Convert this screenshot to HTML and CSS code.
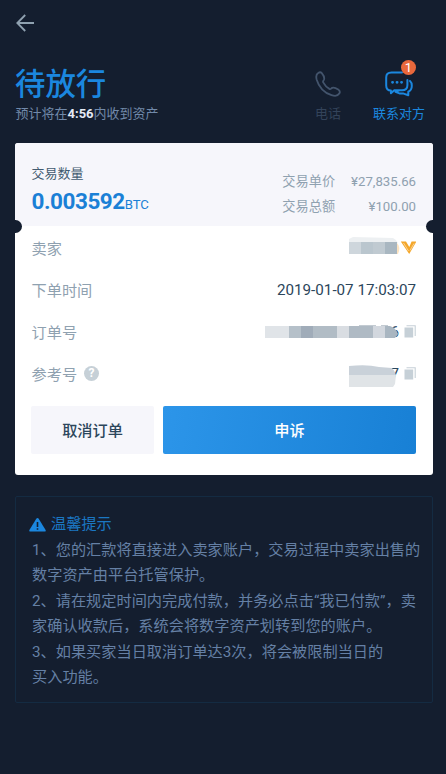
FILE: index.html
```html
<!DOCTYPE html>
<html lang="zh-CN">
<head>
<meta charset="utf-8">
<title>待放行</title>
<link rel="stylesheet" href="styles.css">
</head>
<body>
<nav class="nav">
  <svg class="back" width="18" height="18" viewBox="0 0 18 18"><path d="M9.2 1 1.3 9l7.900 8M1.500 9H18"/></svg>
</nav>
<header class="head">
  <div class="status">
    <h1>待放行</h1>
    <p>预计将在<b>4:56</b>内收到资产</p>
  </div>
  <div class="actions">
    <div class="action muted">
      <svg width="26" height="26" viewBox="0 0 26 26"><path d="M3.200 2C1.200 3.200.9 5.500 1.600 8.400 3.700 15.500 9.300 21.700 16.500 24.100 19.700 25.200 22.600 25.200 24.300 22.600 25.400 20.800 24.700 19.600 23.200 18.600 21.100 17.200 19.200 16 17.200 16.900 15.900 17.500 15.700 18.600 14.400 17.900 11.900 16.500 9.500 13.900 8.200 11.400 7.500 10 8.700 9.600 9.100 8.300 9.600 6.300 8.300 3.900 6.800 2.100 5.600.8 4.500 1.100 3.200 2Z"/></svg>
      <span>电话</span>
    </div>
    <div class="action">
      <svg width="28" height="26" viewBox="0 0 28 26"><path d="M17 1.500H6.500C2.800 1.500 1.200 3.300 1.200 6.500v8c0 3.100 1.400 5 4.700 5v2.800L9.300 19.300H17c3.700 0 5.400-1.800 5.400-5V9M25 10c1.400 1.200 1.800 2.300 1.800 4.700 0 3.200-1 5-3.500 6v3.600L18.600 22.600H15l-4.500-1.700L14.500 19.300"/><path class="dots" d="M7.500 11.300h.1M12 11.300h.1M16.500 11.300h.1"/></svg>
      <span>联系对方</span>
      <i class="badge">1</i>
    </div>
  </div>
</header>
<main class="card">
  <section class="summary">
    <div class="amount">
      <div class="label">交易数量</div>
      <div class="value"><b>0.003592</b><span>BTC</span></div>
    </div>
    <dl class="prices">
      <dt>交易单价</dt><dd>¥27,835.66</dd>
      <dt>交易总额</dt><dd>¥100.00</dd>
    </dl>
  </section>
  <section class="rows">
    <div class="row"><span class="name">卖家</span>
      <svg class="seller" width="68" height="26" viewBox="0 0 68 26"><path fill="#edf0f2" d="M1 5 5 3 45 4q4 2 5 5H1z"/><path fill="#fde4c1" d="M49 9q4 4 1 11h-1z"/><path fill="#ced6dc" d="M1 8h12v12H1z"/><path fill="#bac6ce" d="M13 8h12v12H13z"/><path fill="#c0cad1" d="M25 8h12v12H25z"/><path fill="#a9b7c1" d="M37 8h12v12H37z"/><path fill="#f4a72a" d="M52.800 7.500H58l3.300 5.500 2.300-5.500h4.900L61.200 20z"/><path stroke="#fde4c1" stroke-width=".7" d="m55.500 9 5 8M66 9.500l-4 7"/></svg>
    </div>
    <div class="row"><span class="name">下单时间</span><span class="date">2019-01-07 17:03:07</span></div>
    <div class="row"><span class="name">订单号</span>
      <span class="code"><span class="digit">6</span>
      <svg class="mosaic" width="134" height="14" viewBox="0 0 134 14"><path fill="#8797a5" d="M94 .5h17V1H94zM116 .5h7V1h-7z"/><path fill="#e0e4e8" d="M0 1h24v12H0z"/><path fill="#b5c0c9" d="M24 1h12v12H24z"/><path fill="#a0acb9" d="M36 1h12v12H36z"/><path fill="#b1bcc5" d="M48 1h24v12H48z"/><path fill="#d9dde2" d="M72 1h12v12H72z"/><path fill="#afbac4" d="M84 1h24v12H84z"/><path fill="#d2d7de" d="M108 1h12v12h-12z"/><path fill="#a9b6c1" d="M120 1h5q6 2 8 8l-3 4h-10z"/></svg></span>
      <svg class="copy" width="12" height="13" viewBox="0 0 12 13"><path fill="#c6d0d7" stroke="none" d="M.5 2.500h8.700v10H.5z"/><path d="M2.500.8h8.700v10.200"/></svg>
    </div>
    <div class="row"><span class="name">参考号<i class="help">?</i></span>
      <span class="code"><span class="digit">7</span>
      <svg class="mosaic ref" width="50" height="23" viewBox="0 0 50 23"><path fill="#c9d1d9" d="M0 1Q18-1 30 2l13 1q3 3 4 7H0z"/><path fill="#e0e4e7" d="M0 10h47l-1 9-2 3H0z"/></svg></span>
      <svg class="copy" width="12" height="13" viewBox="0 0 12 13"><path fill="#c6d0d7" stroke="none" d="M.5 2.500h8.700v10H.5z"/><path d="M2.500.8h8.700v10.200"/></svg>
    </div>
  </section>
  <div class="buttons"><button class="cancel">取消订单</button><button class="appeal">申诉</button></div>
</main>
<section class="tips">
  <h2><svg width="17" height="14" viewBox="0 0 17 14"><path fill="#1b87df" d="M7.300.7q1.200-1.200 2.400 0L16.600 12q.5 1.500-1 1.500H1.400Q-.1 13.500.4 12z"/><path fill="#141e2f" d="M7.700 4h1.600v5H7.700zM7.700 10.300h1.600v1.500H7.700z"/></svg>温馨提示</h2>
  <p>1、您的汇款将直接进入卖家账户，交易过程中卖家出售的<br>数字资产由平台托管保护。</p>
  <p>2、请在规定时间内完成付款，并务必点击“我已付款”，卖<br>家确认收款后，系统会将数字资产划转到您的账户。</p>
  <p>3、如果买家当日取消订单达3次，将会被限制当日的<br>买入功能。</p>
</section>
</body>
</html>
```
FILE: styles.css
```css
* { box-sizing: border-box; }
body {
  margin: 0;
  padding: 0 13.500px 0 15px;
  height: 774px;
  overflow: hidden;
  background: #141e2f;
  font-family: Roboto, "Noto Sans CJK SC", sans-serif;
  font-size: 15.200px;
}
h1, h2, p, dl, dd { margin: 0; font-weight: 400; }
i { font-style: normal; }
svg { display: block; flex: none; fill: none; }
.nav { height: 60px; padding: 14px 0 0 1px; }
.back { stroke: #8fa1b0; stroke-width: 1.800; }
.head { height: 82.500px; display: flex; justify-content: space-between; }
.status h1 { height: 43px; line-height: 50px; font-size: 30.400px; font-weight: 500; color: #1b87df; }
.status p { line-height: 22px; font-size: 13px; padding-left: .5px; color: #7189a9; }
.status b { color: #e4eaf5; }
.actions { display: flex; gap: 32px; padding: 11px 7.500px 0 0; }
.action { position: relative; display: flex; flex-direction: column; align-items: center; color: #1b87df; font-size: 13px; }
.action svg { stroke: currentColor; stroke-width: 2; stroke-linejoin: round; stroke-linecap: round; }
.action span { line-height: 20px; margin-top: 7px; }
.action .dots { stroke-width: 2.800; }
.muted { color: #33435a; }
.muted svg { stroke: #43546c; stroke-width: 1.800; }
.badge {
  position: absolute; left: 28px; top: -11px; width: 15px; height: 15px;
  border-radius: 50%; background: #e8683c; color: #fff;
  font-size: 13px; line-height: 15px; text-align: center;
}
.card {
  position: relative; height: 332.500px; border-radius: 3px; background: #fff; overflow: hidden;
}
.card::before, .card::after {
  content: ""; position: absolute; top: 77px; width: 13px; height: 13px;
  border-radius: 50%; background: #141e2f;
}
.card::before { left: -6.500px; }
.card::after { right: -6.500px; }
.summary { height: 83.500px; padding: 20.500px 16.500px 0; display: flex; justify-content: space-between; background: #f6f6fb; }
.label { font-size: 13px; line-height: 22px; color: #425b70; }
.value { line-height: 32px; color: #1b80d6; white-space: nowrap; }
.value b { font-size: 22.500px; letter-spacing: -.45px; }
.value span { font-size: 13.200px; letter-spacing: -.1px; }
.prices { display: grid; grid-template-columns: auto auto; align-content: start; column-gap: 16px; padding-top: 6px; line-height: 25px; font-size: 13.200px; color: #8fa1b0; }
.prices dd { text-align: right; }
.rows { height: 180px; padding: 0 16.500px; }
.row { height: 42px; display: flex; justify-content: space-between; align-items: center; }
.name { flex: 1; display: flex; align-items: center; color: #8fa1b0; }
.date { padding-top: 2px; color: #2c465b; }
.help { width: 15px; height: 15px; margin-left: 7px; border-radius: 50%; background: #c6d0d7; color: #fff; font-size: 12px; font-weight: 700; line-height: 15px; text-align: center; }
.code { position: relative; height: 26px; line-height: 28px; color: #2c465b; }
.mosaic { position: absolute; right: 0; top: 7px; }
.mosaic.ref { top: 5px; }
.copy { margin-left: 5px; stroke: #c6d0d7; stroke-width: 1.100; }
.buttons { display: flex; gap: 9px; padding: 0 16.500px 0 16px; }
.buttons button { height: 48px; border: 0; border-radius: 2px; padding: 0 0 2px; font: 500 15.200px Roboto, "Noto Sans CJK SC", sans-serif; }
.buttons .cancel { width: 123px; background: #f6f6fb; color: #2c465b; }
.buttons .appeal { flex: 1; background: linear-gradient(100deg, #2c95e9, #1880d5); color: #fff; }
.tips { height: 207px; margin-top: 21px; padding: 14px 0 0 16px; border: 1px solid #142b42; border-radius: 2px; line-height: 25.400px; color: #6580a5; white-space: nowrap; }
.tips h2 { display: flex; align-items: center; gap: 5px; height: 27px; margin-left: -3px; font-size: 15.200px; color: #1b77c3; }
```
